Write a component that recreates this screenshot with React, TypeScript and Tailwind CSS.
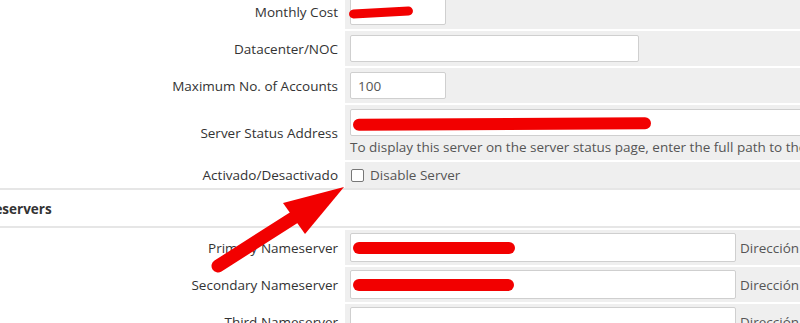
import type { ReactNode } from "react";

function Row({
  label,
  children,
  pad = "py-[4px]",
  sep = true,
}: {
  label: string;
  children: ReactNode;
  pad?: string;
  sep?: boolean;
}) {
  return (
    <div className={`flex ${sep ? "border-b-2 border-white" : ""}`}>
      <div className="flex w-[345px] shrink-0 items-center justify-end pr-[7px] text-[#333]">
        {label}
      </div>
      <div className={`min-w-0 flex-1 overflow-hidden bg-[#efefef] pl-[5px] ${pad}`}>{children}</div>
    </div>
  );
}

function Field({ w, h = "h-[27px]", value }: { w: string; h?: string; value?: string }) {
  return (
    <div
      className={`${w} ${h} flex shrink-0 items-center rounded-[2px] border border-[#cfcfcf] bg-white px-[7px] text-[#555]`}
    >
      {value}
    </div>
  );
}

// red marker strokes that hide private values
function Scribble({ className }: { className: string }) {
  return <span className={`pointer-events-none absolute rounded-full bg-[#f20000] ${className}`} />;
}

export default function App() {
  return (
    <div className="relative h-[323px] w-[800px] overflow-hidden bg-white font-['Open_Sans',sans-serif] text-[13.5px] leading-[20px]">
      <div className="mt-[-6px]">
        <Row label="Monthly Cost">
          <Field w="w-[96px]" />
        </Row>
        <Row label="Datacenter/NOC">
          <Field w="w-[289px]" />
        </Row>
        <Row label="Maximum No. of Accounts">
          <Field w="w-[96px]" value="100" />
        </Row>
        <Row label="Server Status Address">
          <Field w="w-[520px]" />
          <div className="mt-[2px] whitespace-nowrap leading-[18px] text-[#555]">
            To display this server on the server status page, enter the full path to the server status folder
          </div>
        </Row>
        <Row label="Activado/Desactivado" pad="py-0" sep={false}>
          <label className="flex h-[26px] items-center gap-[6px] text-[#555]">
            <input
              type="checkbox"
              className="ml-[1px] h-[13px] w-[13px] appearance-none rounded-[2px] border border-[#777] bg-white"
            />
            Disable Server
          </label>
        </Row>
      </div>

      <div className="h-[2px] bg-[#e6e6e6]" />
      <div className="flex h-[36px] items-center pt-[1px]">
        <span className="ml-[-38px] font-bold text-[#333]">Nameservers</span>
      </div>
      <div className="mb-[2px] h-[2px] bg-[#e6e6e6]" />

      {["Primary Nameserver", "Secondary Nameserver", "Third Nameserver"].map((n) => (
        <Row key={n} label={n} pad="py-[3px]">
          <div className="flex items-center gap-[4px]">
            <Field w="w-[386px]" h="h-[29px]" />
            <span className="whitespace-nowrap text-[#555]">Dirección IP</span>
          </div>
        </Row>
      ))}

      <Scribble className="left-[349px] top-[8px] h-[9px] w-[64px] -rotate-[3deg]" />
      <Scribble className="left-[353px] top-[118px] h-[12px] w-[298px] -rotate-[0.3deg]" />
      <Scribble className="left-[353px] top-[242px] h-[12px] w-[162px]" />
      <Scribble className="left-[353px] top-[279px] h-[12px] w-[161px]" />

      <svg className="pointer-events-none absolute left-0 top-0" width="800" height="323">
        <line x1="218" y1="266" x2="298" y2="215" stroke="#f20000" strokeWidth="13" strokeLinecap="round" />
        <polygon points="344,187 283,203 305,234" fill="#f20000" />
      </svg>
    </div>
  );
}
